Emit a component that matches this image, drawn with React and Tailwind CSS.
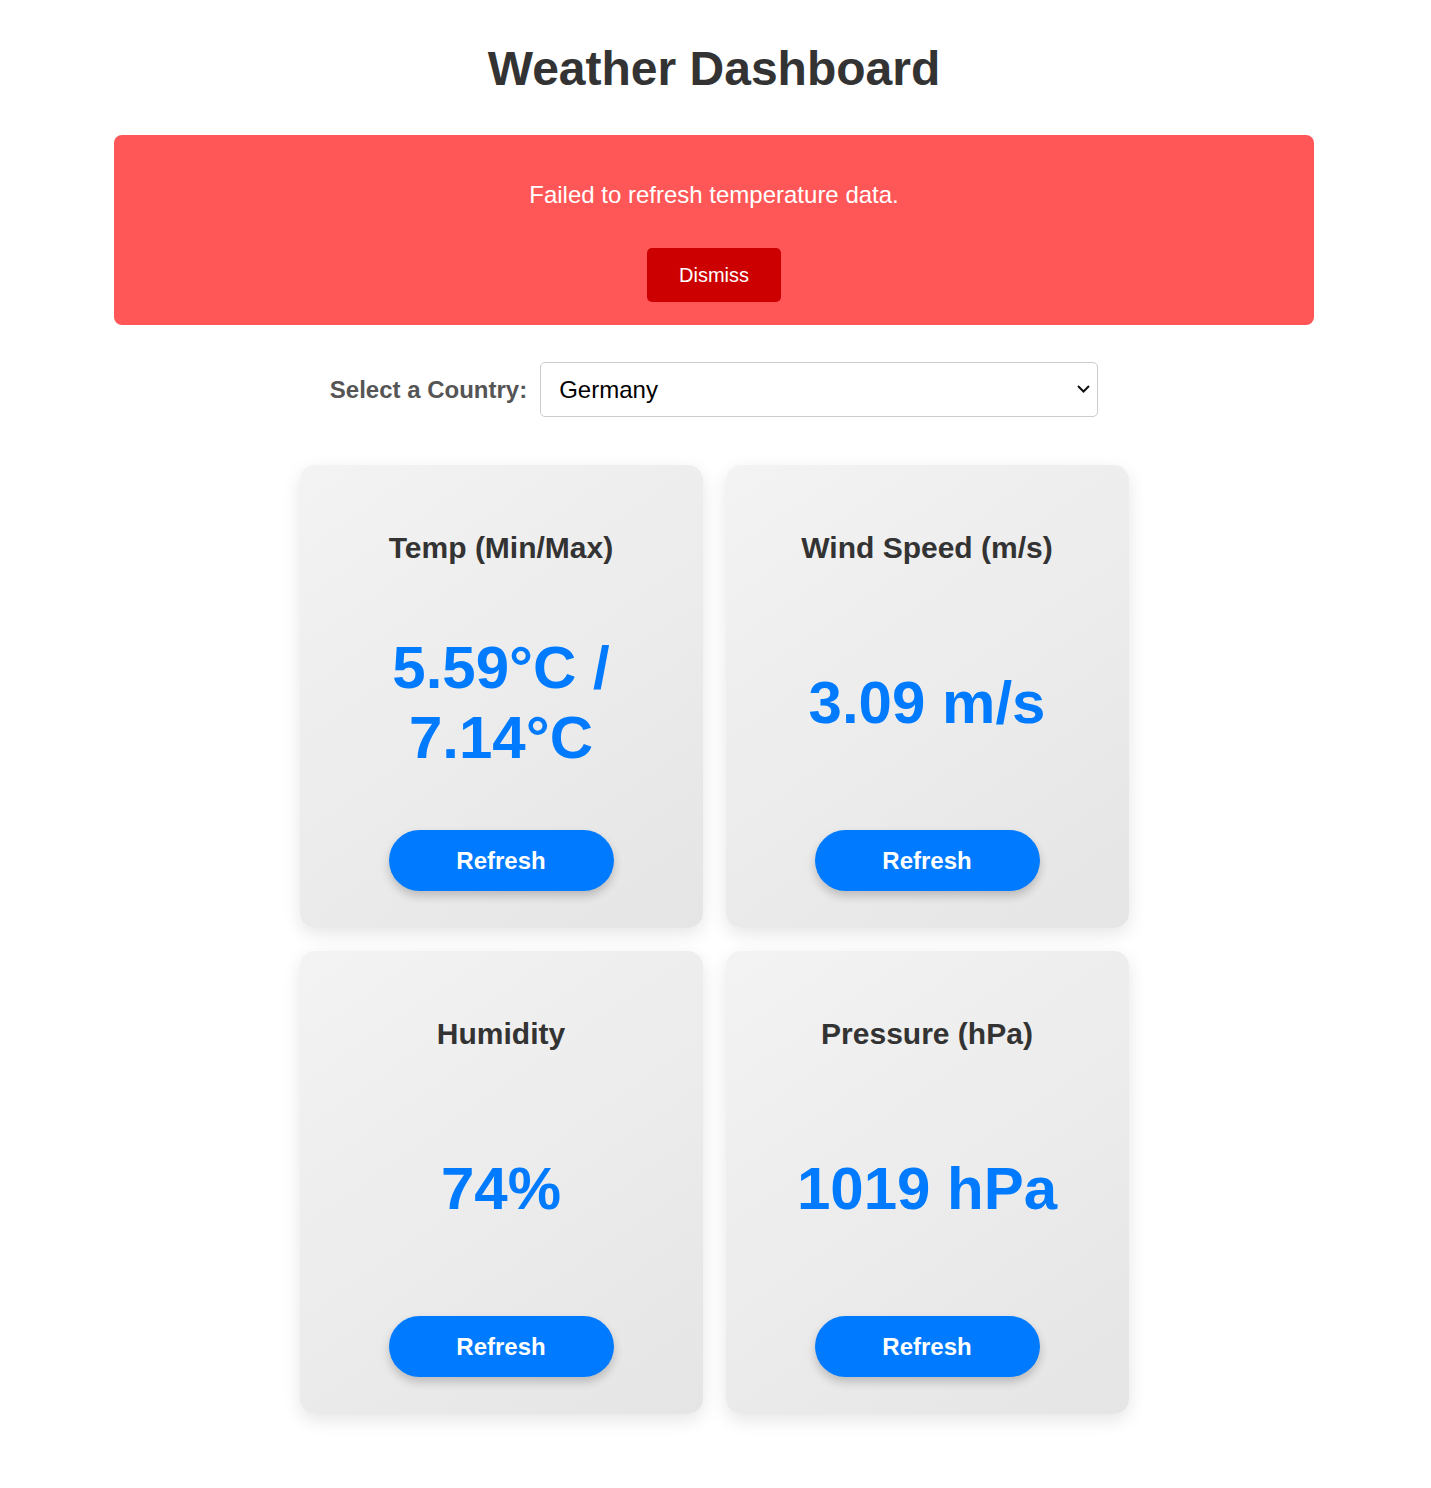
import React, { useState } from 'react';

const cards = [
  { title: 'Temp (Min/Max)', value: '5.59°C / 7.14°C' },
  { title: 'Wind Speed (m/s)', value: '3.09 m/s' },
  { title: 'Humidity', value: '74%' },
  { title: 'Pressure (hPa)', value: '1019 hPa' },
];

function Card({ title, value }) {
  return (
    <div className="flex flex-col items-center h-[463px] pt-[66px] pb-[37px] px-[40px] rounded-[15px] bg-[linear-gradient(145deg,#f3f3f3,#e5e5e5)] shadow-[0_6px_18px_rgba(0,0,0,0.1)]">
      <h3 className="text-[30px] leading-[34px] font-bold text-[#333] text-center">{title}</h3>
      <div className="flex-1 flex items-center justify-center pt-[11px] w-full">
        <p className="text-[60px] leading-[70px] font-bold text-[#007bff] text-center">{value}</p>
      </div>
      <button className="w-[225px] h-[61px] rounded-full bg-[#007bff] text-white text-[24px] font-bold shadow-[0_5px_10px_rgba(0,0,0,0.2)]">
        Refresh
      </button>
    </div>
  );
}

export default function App() {
  const [country, setCountry] = useState('Germany');
  const [showError, setShowError] = useState(true);

  return (
    <div className="min-h-screen bg-white pt-[41px] pb-[74px] pr-[3px] font-['Liberation_Sans',Arial,sans-serif]">
      <h1 className="text-center text-[48px] leading-[55px] font-bold text-[#333]">Weather Dashboard</h1>

      {showError && (
        <div className="mx-auto mt-[39px] w-[1200px] rounded-[8px] bg-[#ff5757] pt-[46px] pb-[23px] flex flex-col items-center">
          <p className="text-white text-[24px] leading-[28px]">Failed to refresh temperature data.</p>
          <button
            onClick={() => setShowError(false)}
            className="mt-[39px] h-[54px] px-[32px] rounded-[5px] bg-[#cc0000] text-white text-[20px]"
          >
            Dismiss
          </button>
        </div>
      )}

      <div className="flex items-center justify-center gap-[13px] mt-[37px]">
        <label className="text-[24px] font-bold text-[#555]">Select a Country:</label>
        <div className="relative">
          <select
            value={country}
            onChange={(e) => setCountry(e.target.value)}
            className="appearance-none w-[558px] h-[55px] pl-[18px] border border-[#ccc] rounded-[5px] bg-white text-[24px] text-black outline-none"
          >
            <option>Germany</option>
            <option>France</option>
            <option>Italy</option>
            <option>Spain</option>
          </select>
          <svg
            className="absolute right-[8px] top-[23px] pointer-events-none"
            width="13"
            height="8"
            viewBox="0 0 13 8"
            fill="none"
          >
            <path d="M1 1l5.5 5.5L12 1" stroke="#111" strokeWidth="2" />
          </svg>
        </div>
      </div>

      <div className="grid grid-cols-[403px_403px] gap-[23px] justify-center mt-[48px]">
        {cards.map((c) => (
          <Card key={c.title} title={c.title} value={c.value} />
        ))}
      </div>
    </div>
  );
}
